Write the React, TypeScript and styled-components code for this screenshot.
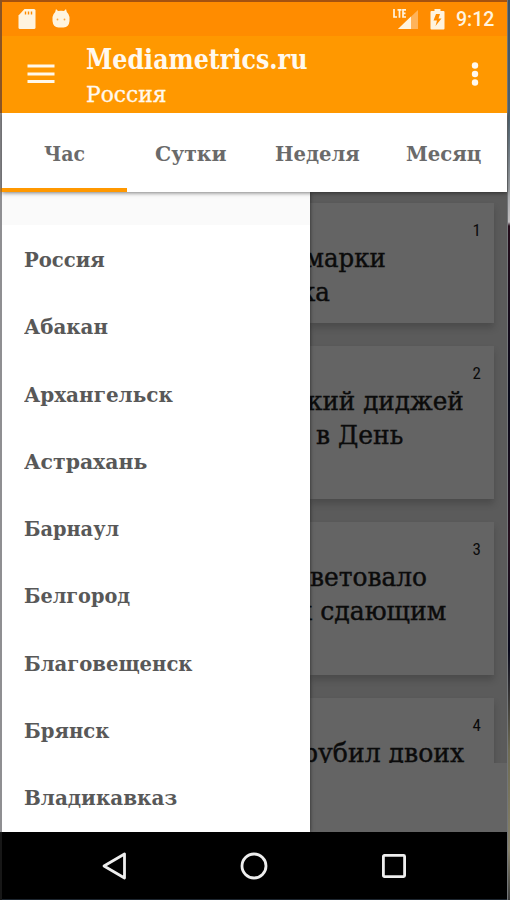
import React, { useLayoutEffect, useRef, useState } from "react";
import styled, { createGlobalStyle } from "styled-components";

const GlobalStyle = createGlobalStyle`
  * { box-sizing: border-box; }
  html, body { margin: 0; padding: 0; background: #000; }
`;

const Frame = styled.div`
  width: 510px;
  height: 900px;
  overflow: hidden;
  display: grid;
  grid-template-columns: 2px 505px 3px;
  background: #000;
  font-family: "Roboto Slab", "DejaVu Serif Condensed", "DejaVu Serif", serif;
  font-stretch: condensed;
`;

const LeftEdge = styled.div`
  background: linear-gradient(to bottom, #8a5424 0 113px, #8f8f92 113px 188px, #c98a35 188px 192px, #8f8f92 192px 832px, #171717 832px);
`;

const RightEdge = styled.div`
  border-left: 1px solid #737679;
  background: linear-gradient(to bottom, #3b5266 0, #4b6170 110px, #a4a7aa 190px, #c1bec0 222px, #250d1b 226px, #08091a 400px, #27101e 540px, #08081b 650px, #6e6b53 750px, #85806a 850px, #3b3c3c 900px);
`;

const Screen = styled.div`
  display: flex;
  flex-direction: column;
  height: 900px;
  min-width: 0;
  border-top: 2px solid #a5520f;
  border-bottom: 1px solid #1d2630;
`;

const StatusBar = styled.header`
  flex: 0 0 34px;
  display: flex;
  align-items: center;
  justify-content: space-between;
  padding: 0 12px 0 16px;
  background: #ff8c00;
  color: #fff4df;
`;

const StatusGroup = styled.div<{ $gap: number }>`
  display: flex;
  align-items: center;
  gap: ${(p) => p.$gap}px;
`;

const Clock = styled.span`
  font: 500 19.5px/32px Roboto, sans-serif;
  width: 39px;
  padding-top: 2px;
  white-space: nowrap;
`;

const AppBar = styled.div`
  flex: 0 0 77px;
  display: flex;
  position: relative;
  z-index: 3;
  background: #ff9800;
  color: #fff9ee;
`;

const IconButton = styled.button<{ $width: number }>`
  width: ${(p) => p.$width}px;
  padding: 0 0 2px;
  border: 0;
  background: none;
  display: flex;
  align-items: center;
  justify-content: center;
`;

const Titles = styled.div`
  flex: 1;
  padding: 4px 0 0 7px;
`;

const Title = styled.h1`
  margin: 0;
  height: 39px;
  font-size: 28px;
  line-height: 40px;
  font-weight: 700;
`;

const Subtitle = styled.div`
  font-size: 21.5px;
  line-height: 32px;
  -webkit-text-stroke: 0.3px currentColor;
`;

const Tabs = styled.nav`
  flex: 0 0 79px;
  display: grid;
  grid-template-columns: 125px 127px 126px 127px;
  background: #fff;
  position: relative;
  z-index: 2;
  box-shadow: 0 1px 4px rgba(0, 0, 0, 0.5);
`;

const Tab = styled.div<{ $active?: boolean }>`
  display: flex;
  justify-content: center;
  padding-top: 26px;
  border-bottom: 4px solid ${(p) => (p.$active ? "#ff9800" : "transparent")};
  color: #6a6a6a;
  font-size: 21px;
  line-height: 30px;
  font-weight: 700;
`;

const Content = styled.main`
  flex: 0 0 640px;
  display: grid;
  grid-template-columns: 308px 197px;
  background: #646464;
  overflow: hidden;
`;

const Drawer = styled.aside`
  background: #fff;
  position: relative;
  z-index: 1;
  box-shadow: 0 0 4px rgba(0, 0, 0, 0.6);
`;

const DrawerInset = styled.div`
  height: 33px;
  background: #fafafa;
`;

const City = styled.div`
  height: 67.3px;
  padding: 0 22px;
  color: #585858;
  font-size: 21px;
  line-height: 69px;
  font-weight: 700;
`;

const Feed = styled.section`
  height: 571px;
  padding-top: 11px;
  display: flex;
  flex-direction: column;
  gap: 23px;
  background: #5b5b5b;
  overflow: hidden;
`;

const Card = styled.article<{ $height: number }>`
  flex: 0 0 ${(p) => p.$height}px;
  margin-right: 13px;
  padding-top: 15px;
  background: #646464;
  color: #0b0b0b;
  box-shadow: 0 5px 7px rgba(0, 0, 0, 0.18);
`;

const Rank = styled.div`
  height: 24px;
  padding-right: 13px;
  text-align: right;
  font-family: "Roboto Slab", Roboto, sans-serif;
  font-size: 17px;
  line-height: 24px;
`;

const Line = styled.div<{ $shift: number }>`
  height: 33.5px;
  margin-left: ${(p) => p.$shift}px;
  font-size: 25.5px;
  line-height: 33.5px;
  -webkit-text-stroke: 0.4px currentColor;
`;

const NavBar = styled.footer`
  flex: 1;
  display: grid;
  grid-template-columns: 140px 140px 140px;
  align-items: center;
  padding-left: 42px;
  background: #000;
`;

const NavItem = styled.div`
  display: flex;
  justify-content: center;
`;

const Fit = styled.span`
  display: inline-block;
  white-space: pre;
`;

const Glyphs = styled.span`
  display: inline-block;
  transform-origin: 0 50%;
`;

/** Condenses or expands a run of text so that it occupies a given width. */
function FitText({ text, width }: { text: string; width: number }) {
  const ref = useRef<HTMLSpanElement>(null);
  const [scale, setScale] = useState(1);
  useLayoutEffect(() => {
    if (ref.current) setScale(width / ref.current.offsetWidth);
  }, [text, width]);
  return (
    <Fit style={{ width }}>
      <Glyphs ref={ref} style={{ transform: `scaleX(${scale})` }}>{text}</Glyphs>
    </Fit>
  );
}

const tabs: [string, number][] = [["Час", 41], ["Сутки", 72], ["Неделя", 85], ["Месяц", 75]];

const cities: [string, number][] = [
  ["Россия", 81], ["Абакан", 84], ["Архангельск", 149], ["Астрахань", 123], ["Барнаул", 95],
  ["Белгород", 106], ["Благовещенск", 168], ["Брянск", 85], ["Владикавказ", 153],
];

const stories: { height: number; lines: [string, number, number][] }[] = [
  { height: 120, lines: [["марки", 81, -5], ["ка", 30, -10]] },
  { height: 153, lines: [["кий диджей", 157, -3], ["в День", 87, 6]] },
  { height: 153, lines: [["ветовало", 117, 0], ["х сдающим", 148, -12]] },
  { height: 153, lines: [["рубил двоих", 162, -8]] },
];

export default function App() {
  return (
    <>
      <GlobalStyle />
      <Frame>
        <LeftEdge />
        <Screen>
          <StatusBar>
            <StatusGroup $gap={16}>
              <svg width="18" height="21" viewBox="0 0 18 21">
                <path d="M6.500 0H16q1.500 0 1.500 1.500v17Q17.500 20 16 20H2Q.5 20 .5 18.500V6.500z" fill="currentColor" />
                <path d="M7.500 2.500v3M10.500 2.500v3M13.500 2.500v3" stroke="#ff8c00" strokeWidth="1.400" />
              </svg>
              <svg width="18" height="21" viewBox="0 0 18 21">
                <path d="M4 0l2 2q3-.7 6 0l2-2 .8 3Q17 5 17.500 8v4q-.5 6-6 6.500h-5Q1 18 .5 12V8Q1 5 3.200 3z" fill="currentColor" />
                <circle cx="5.500" cy="10.500" r=".9" fill="#ffa53a" />
                <circle cx="12.500" cy="10.500" r=".9" fill="#ffa53a" />
              </svg>
            </StatusGroup>
            <StatusGroup $gap={11}>
              <svg width="26" height="21" viewBox="0 0 26 21">
                <path d="M25 1v19H5z" fill="#ffb35a" />
                <path d="M18 7.500V20H5z" fill="currentColor" />
                <path d="M1 0v8h3M4.500.8h4M6.500.8V8.800M13 .8H10v7.200h3M10 4.300h2.500" stroke="currentColor" strokeWidth="1.700" fill="none" />
              </svg>
              <svg width="15" height="21" viewBox="0 0 15 21">
                <path d="M4.500 0h6v2h3q1 0 1 1v16.500q0 1-1 1h-12q-1 0-1-1V3q0-1 1-1h3z" fill="currentColor" />
                <path d="M10 5H6L3.500 11.500H7L5.500 17l6-7.500H8.500z" fill="#ff8c00" />
              </svg>
              <Clock>9:12</Clock>
            </StatusGroup>
          </StatusBar>
          <AppBar>
            <IconButton $width={77} aria-label="Menu">
              <svg width="28" height="20" viewBox="0 0 28 20">
                <path d="M.5 2h27M.5 10h27M.5 17.500h27" stroke="#fff8eb" strokeWidth="2.900" />
              </svg>
            </IconButton>
            <Titles>
              <Title><FitText text="Mediametrics.ru" width={221} /></Title>
              <Subtitle><FitText text="Россия" width={80} /></Subtitle>
            </Titles>
            <IconButton $width={64} aria-label="More">
              <svg width="8" height="24" viewBox="0 0 8 24">
                <circle cx="4" cy="3.500" r="3.200" fill="#fff9ee" />
                <circle cx="4" cy="12" r="3.200" fill="#fff9ee" />
                <circle cx="4" cy="20.500" r="3.200" fill="#fff9ee" />
              </svg>
            </IconButton>
          </AppBar>
          <Tabs>
            {tabs.map(([label, width], i) => (
              <Tab key={label} $active={i === 0}><FitText text={label} width={width} /></Tab>
            ))}
          </Tabs>
          <Content>
            <Drawer>
              <DrawerInset />
              {cities.map(([name, width]) => (
                <City key={name}><FitText text={name} width={width} /></City>
              ))}
            </Drawer>
            <Feed>
              {stories.map((story, i) => (
                <Card key={i} $height={story.height}>
                  <Rank>{i + 1}</Rank>
                  {story.lines.map(([text, width, shift]) => (
                    <Line key={text} $shift={shift}><FitText text={text} width={width} /></Line>
                  ))}
                </Card>
              ))}
            </Feed>
          </Content>
          <NavBar>
            <NavItem>
              <svg width="24" height="28" viewBox="0 0 24 28">
                <path d="M22.500 2v24L2 14z" fill="none" stroke="#eee" strokeWidth="2.800" strokeLinejoin="round" />
              </svg>
            </NavItem>
            <NavItem>
              <svg width="28" height="28" viewBox="0 0 28 28">
                <circle cx="14" cy="14" r="12" fill="none" stroke="#eee" strokeWidth="2.800" />
              </svg>
            </NavItem>
            <NavItem>
              <svg width="26" height="26" viewBox="0 0 26 26">
                <rect x="2.400" y="2.400" width="21.200" height="21.200" rx="1" fill="none" stroke="#eee" strokeWidth="2.800" />
              </svg>
            </NavItem>
          </NavBar>
        </Screen>
        <RightEdge />
      </Frame>
    </>
  );
}
